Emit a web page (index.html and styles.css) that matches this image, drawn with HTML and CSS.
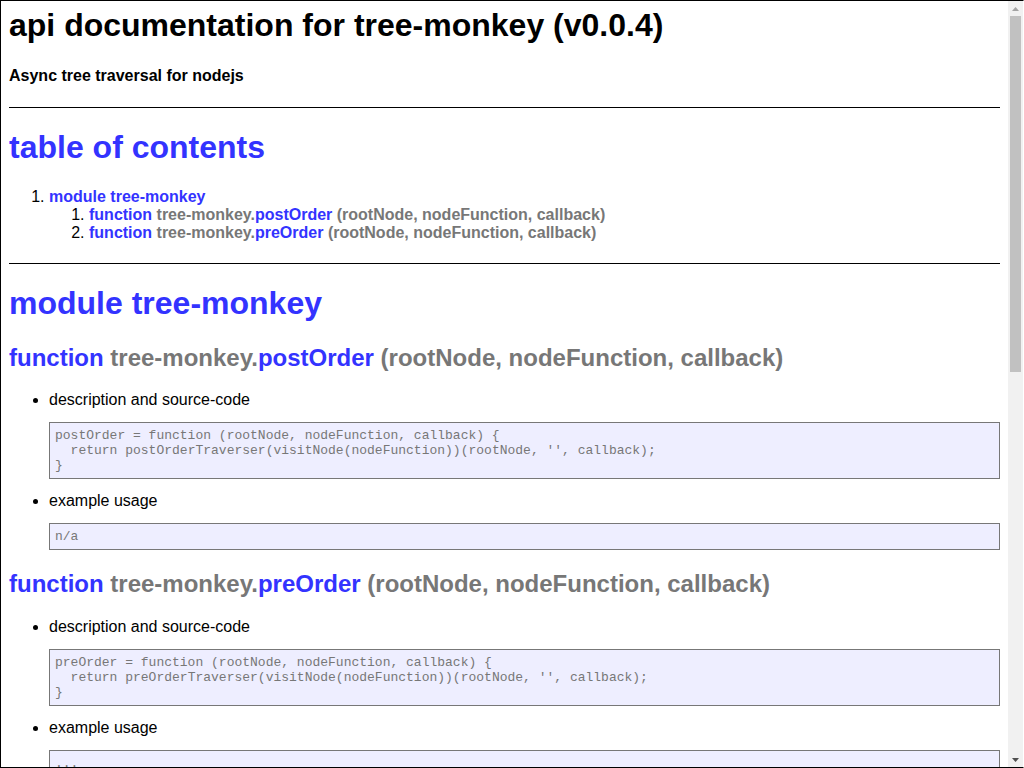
FILE: index.html
```html
<!DOCTYPE html>
<html lang="en">
<head>
<meta charset="utf-8">
<title>api documentation for tree-monkey (v0.0.4)</title>
<link rel="stylesheet" href="styles.css">
</head>
<body>
<div class="frame">
  <div class="page">
    <h1 class="title">api documentation for tree-monkey (v0.0.4)</h1>
    <h4 class="tagline">Async tree traversal for nodejs</h4>
    <hr class="rule">
    <h1 class="section-title"><a class="link" href="#apidoc.tableOfContents">table of contents</a></h1>
    <ol class="toc">
      <li><a class="link" href="#apidoc.module.tree-monkey">module tree-monkey</a>
        <ol class="toc-sub">
          <li><a class="link" href="#apidoc.element.tree-monkey.postOrder">function <span class="gray">tree-monkey.</span>postOrder <span class="gray">(rootNode, nodeFunction, callback)</span></a></li>
          <li><a class="link" href="#apidoc.element.tree-monkey.preOrder">function <span class="gray">tree-monkey.</span>preOrder <span class="gray">(rootNode, nodeFunction, callback)</span></a></li>
        </ol>
      </li>
    </ol>
    <hr class="rule">
    <h1 class="section-title"><a class="link" href="#apidoc.module.tree-monkey">module tree-monkey</a></h1>

    <h2 class="fn"><a class="link" href="#apidoc.element.tree-monkey.postOrder">function <span class="gray">tree-monkey.</span>postOrder <span class="gray">(rootNode, nodeFunction, callback)</span></a></h2>
    <ul class="details">
      <li>description and source-code
<pre class="code">postOrder = function (rootNode, nodeFunction, callback) {
  return postOrderTraverser(visitNode(nodeFunction))(rootNode, '', callback);
}</pre>
      </li>
      <li>example usage
<pre class="code">n/a</pre>
      </li>
    </ul>

    <h2 class="fn"><a class="link" href="#apidoc.element.tree-monkey.preOrder">function <span class="gray">tree-monkey.</span>preOrder <span class="gray">(rootNode, nodeFunction, callback)</span></a></h2>
    <ul class="details">
      <li>description and source-code
<pre class="code">preOrder = function (rootNode, nodeFunction, callback) {
  return preOrderTraverser(visitNode(nodeFunction))(rootNode, '', callback);
}</pre>
      </li>
      <li>example usage
<pre class="code">...
var treeMonkey = require('tree-monkey');
...</pre>
      </li>
    </ul>
  </div>
  <div class="scrollbar" aria-hidden="true">
    <div class="sb-btn">
      <svg class="sb-arrow" width="7" height="4" viewBox="0 0 7 4"><polygon points="3.5,0 7,4 0,4" fill="#a3a3a3"/></svg>
    </div>
    <div class="sb-track">
      <div class="sb-thumb"></div>
    </div>
    <div class="sb-btn">
      <svg class="sb-arrow" width="7" height="4" viewBox="0 0 7 4"><polygon points="0,0 7,0 3.5,4" fill="#505050"/></svg>
    </div>
  </div>
</div>
</body>
</html>
```

FILE: styles.css
```css
html,
body {
  margin: 0;
  height: 100%;
}

body {
  background: #fff;
  color: #000;
  font-family: "Liberation Sans", Arial, sans-serif;
}

.frame {
  box-sizing: border-box;
  height: 100vh;
  border: 1px solid #000;
  border-right-color: #fff;
  display: flex;
  overflow: hidden;
}

.page {
  flex: 1;
  min-width: 0;
  overflow: hidden;
  padding: 6px 8px 8px 8px;
}

.title {
  font-size: 32px;
  margin: 0 0 22.5px;
}

.tagline {
  font-size: 16px;
  margin: 21.28px 0 22.28px;
}

.rule {
  height: 0;
  border: 0;
  border-top: 1px solid #000;
  margin: 21px 0;
}

.section-title {
  font-size: 32px;
  margin: 21.44px 0;
}

.link {
  color: #33f;
  font-weight: bold;
  text-decoration: none;
}

.gray {
  color: #777;
}

.toc {
  margin: 16px 0;
  padding-left: 40px;
}

.toc-sub {
  margin: 0;
  padding-left: 40px;
}

.fn {
  font-size: 24px;
  margin: 19.92px 0;
}

.details {
  margin: 16px 0;
  padding-left: 40px;
  list-style: disc;
}

.code {
  background: #eef;
  border: 1px solid #777;
  color: #777;
  padding: 5px;
  margin: 13px 0;
  font-family: "Liberation Mono", monospace;
  font-size: 13px;
  line-height: 15px;
  white-space: pre-wrap;
}

.scrollbar {
  width: 15px;
  flex: none;
  display: flex;
  flex-direction: column;
  background: #f1f1f1;
}

.sb-btn {
  height: 15px;
  flex: none;
  display: flex;
  align-items: center;
  justify-content: center;
}

.sb-arrow {
  display: block;
}

.sb-track {
  flex: 1;
}

.sb-thumb {
  height: 356px;
  margin: 0 2px;
  background: #c1c1c1;
}
```
